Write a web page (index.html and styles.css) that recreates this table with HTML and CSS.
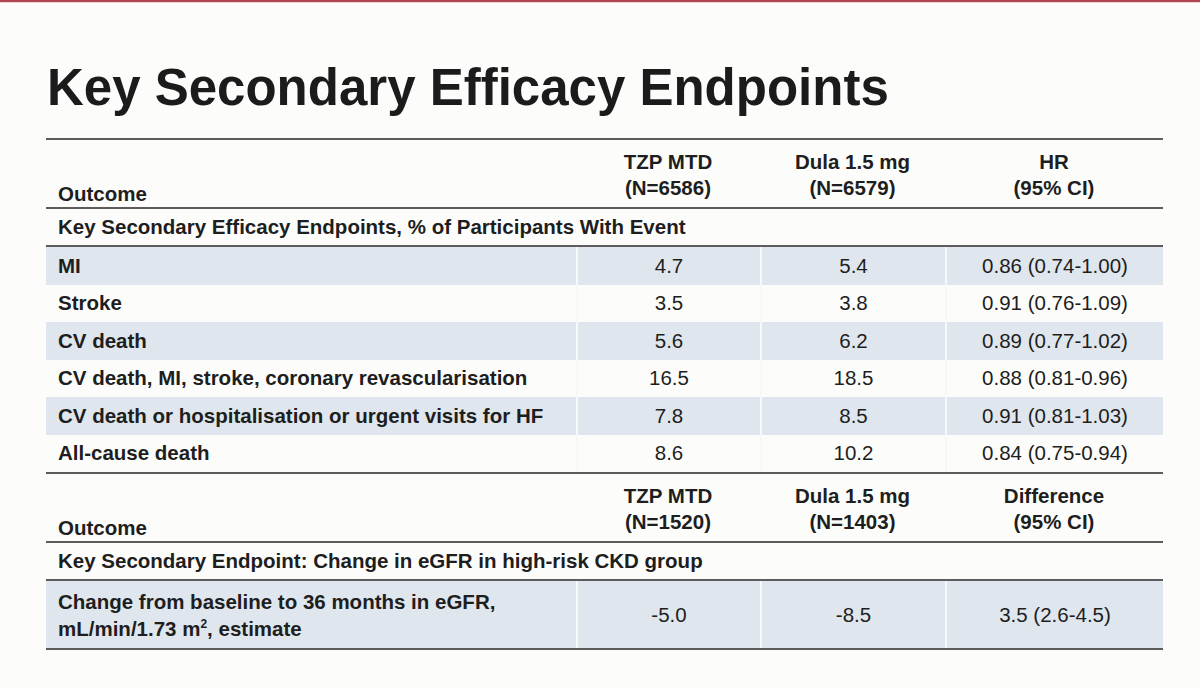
FILE: index.html
```html
<!DOCTYPE html>
<html lang="en">
<head>
<meta charset="utf-8">
<title>Key Secondary Efficacy Endpoints</title>
<link rel="stylesheet" href="styles.css">
</head>
<body>
<div class="topbar"></div>
<h1 class="title">Key Secondary Efficacy Endpoints</h1>
<div class="table">
  <div class="row head">
    <div class="cell label">Outcome</div>
    <div class="cell"><span>TZP MTD<br>(N=6586)</span></div>
    <div class="cell"><span>Dula 1.5 mg<br>(N=6579)</span></div>
    <div class="cell"><span>HR<br>(95% CI)</span></div>
  </div>
  <div class="row section">
    <div class="cell label">Key Secondary Efficacy Endpoints, % of Participants With Event</div>
  </div>
  <div class="row data shade">
    <div class="cell label">MI</div>
    <div class="cell">4.7</div>
    <div class="cell">5.4</div>
    <div class="cell">0.86 (0.74-1.00)</div>
  </div>
  <div class="row data">
    <div class="cell label">Stroke</div>
    <div class="cell">3.5</div>
    <div class="cell">3.8</div>
    <div class="cell">0.91 (0.76-1.09)</div>
  </div>
  <div class="row data shade">
    <div class="cell label">CV death</div>
    <div class="cell">5.6</div>
    <div class="cell">6.2</div>
    <div class="cell">0.89 (0.77-1.02)</div>
  </div>
  <div class="row data">
    <div class="cell label">CV death, MI, stroke, coronary revascularisation</div>
    <div class="cell">16.5</div>
    <div class="cell">18.5</div>
    <div class="cell">0.88 (0.81-0.96)</div>
  </div>
  <div class="row data shade">
    <div class="cell label">CV death or hospitalisation or urgent visits for HF</div>
    <div class="cell">7.8</div>
    <div class="cell">8.5</div>
    <div class="cell">0.91 (0.81-1.03)</div>
  </div>
  <div class="row data ruled">
    <div class="cell label">All-cause death</div>
    <div class="cell">8.6</div>
    <div class="cell">10.2</div>
    <div class="cell">0.84 (0.75-0.94)</div>
  </div>
  <div class="row head">
    <div class="cell label">Outcome</div>
    <div class="cell"><span>TZP MTD<br>(N=1520)</span></div>
    <div class="cell"><span>Dula 1.5 mg<br>(N=1403)</span></div>
    <div class="cell"><span>Difference<br>(95% CI)</span></div>
  </div>
  <div class="row section">
    <div class="cell label">Key Secondary Endpoint: Change in eGFR in high-risk CKD group</div>
  </div>
  <div class="row data tall shade ruled">
    <div class="cell label"><span>Change from baseline to 36 months in eGFR,<br>mL/min/1.73 m<sup>2</sup>, estimate</span></div>
    <div class="cell">-5.0</div>
    <div class="cell">-8.5</div>
    <div class="cell">3.5 (2.6-4.5)</div>
  </div>
</div>
</body>
</html>
```

FILE: styles.css
```css
html, body {
  margin: 0;
  padding: 0;
}

body {
  background: #fcfdfb;
  color: #1e1e1e;
  font-family: "Liberation Sans", Arial, sans-serif;
  width: 1200px;
  height: 688px;
  overflow: hidden;
}

.topbar {
  height: 2px;
  background: #b24650;
  border-bottom: 1px solid #ecd3d3;
}

.title {
  margin: 55px 0 0 47px;
  font-size: 51px;
  line-height: 60px;
  font-weight: bold;
  color: #1b1b1b;
  letter-spacing: 0;
}

.table {
  margin: 20px 0 0 46px;
  width: 1117px;
  border-top: 2px solid #5c5c5c;
  font-size: 20.5px;
}

.row {
  display: grid;
  grid-template-columns: 530px 184px 185px 218px;
}

.cell {
  display: flex;
  align-items: center;
  justify-content: center;
  text-align: center;
}

.cell.label {
  justify-content: flex-start;
  text-align: left;
  padding-left: 12px;
  font-weight: bold;
}

.head {
  height: 67px;
  border-bottom: 2px solid #5c5c5c;
  font-weight: bold;
  line-height: 26px;
}

.head .cell {
  align-items: flex-end;
  padding-bottom: 6px;
}

.head .cell.label {
  padding-bottom: 0;
}

.section {
  height: 36px;
  border-bottom: 2px solid #5c5c5c;
}

.section .cell.label {
  grid-column: 1 / -1;
}

.data {
  height: 37.5px;
}

.data .cell + .cell {
  border-left: 2px solid #f6f8f9;
}

.shade {
  background: #dfe6ed;
}

.ruled {
  border-bottom: 2px solid #5c5c5c;
}

.tall {
  height: 67px;
  line-height: 27px;
}

sup {
  font-size: 12px;
  line-height: 0;
  vertical-align: 8px;
}
```
